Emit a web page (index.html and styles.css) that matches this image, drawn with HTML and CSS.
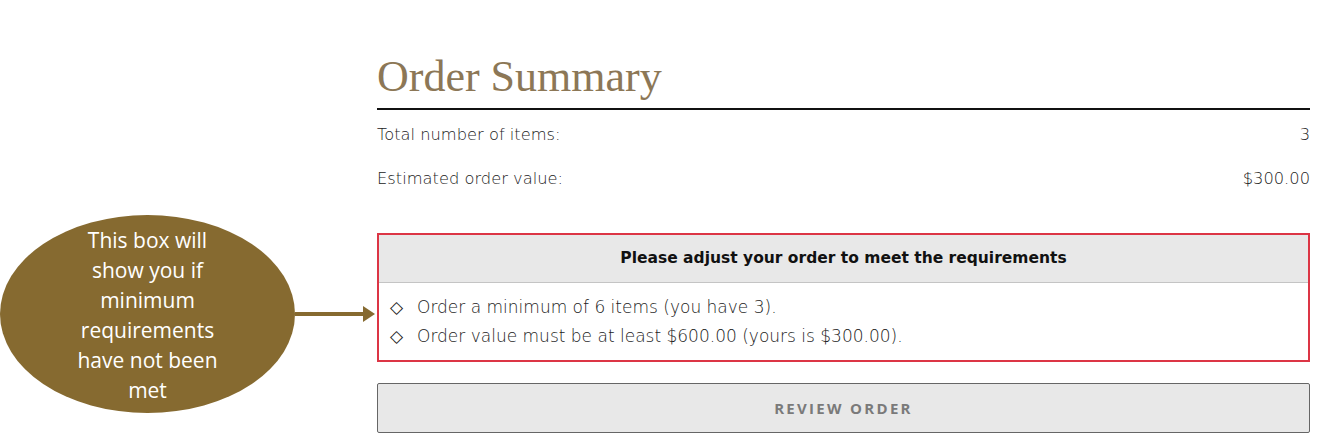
FILE: index.html
```html
<!DOCTYPE html>
<html lang="en">
<head>
  <meta charset="UTF-8" />
  <meta name="viewport" content="width=device-width, initial-scale=1" />
  <title>Order Summary</title>
  <link rel="stylesheet" href="styles.css">
</head>
<body>
  <div class="callout">
    <div class="bubble">This box will show you if minimum requirements have not been met</div>
    <div class="arrow"></div>
  </div>

  <div class="summary">
    <h1>Order Summary</h1>

    <div class="row"><span>Total number of items:</span><span>3</span></div>
    <div class="row"><span>Estimated order value:</span><span>$300.00</span></div>

    <div class="notice">
      <div class="notice-head">Please adjust your order to meet the requirements</div>
      <ul>
        <li>Order a minimum of 6 items (you have 3).</li>
        <li>Order value must be at least $600.00 (yours is $300.00).</li>
      </ul>
    </div>

    <button class="review">Review Order</button>
  </div>
</body>
</html>
```

FILE: styles.css
```css
body {
  margin: 0;
  background: #fff;
  font-family: "DejaVu Sans", sans-serif;
  color: #333;
}
.summary {
  width: 933px;
  margin-left: 377px;
  padding-top: 52px;
}
h1 {
  font-family: "Liberation Serif", serif;
  font-weight: normal;
  font-size: 44px;
  color: #8c7756;
  margin: 0;
  padding-bottom: 6px;
  border-bottom: 2px solid #111;
  line-height: 50px;
}
.row {
  display: flex;
  justify-content: space-between;
  font-size: 16.3px;
  font-weight: 200;
  height: 44px;
  line-height: 44px;
  color: #222;
}
.row:first-of-type {
  margin-top: 3px;
}
.notice {
  margin-top: 32px;
  border: 2px solid #dc3545;
}
.notice-head {
  background: #e8e8e8;
  border-bottom: 1px solid #c4c4c4;
  text-align: center;
  font-weight: bold;
  font-size: 15.5px;
  height: 47px;
  line-height: 47px;
  color: #111;
}
.notice ul {
  list-style: none;
  margin: 0;
  padding: 10px 12px 9px 11px;
}
.notice li {
  font-size: 17px;
  font-weight: 200;
  line-height: 29px;
  color: #222;
}
.notice li::before {
  content: "\25C7";
  display: inline-block;
  width: 27px;
  font-size: 17px;
  font-weight: normal;
}
.review {
  display: block;
  width: 100%;
  margin-top: 21px;
  height: 50px;
  background: #e8e8e8;
  border: 1px solid #666;
  border-radius: 2px;
  font-family: "Open Sans", sans-serif;
  font-weight: bold;
  font-size: 15px;
  letter-spacing: 2.3px;
  text-transform: uppercase;
  color: #7a7a7a;
}
.callout {
  position: absolute;
  left: 0;
  top: 215px;
  display: flex;
  align-items: center;
}
.bubble {
  width: 295px;
  height: 198px;
  border-radius: 50%;
  background: #866a30;
  color: #fff;
  font-family: "Open Sans", sans-serif;
  font-size: 21px;
  line-height: 30px;
  text-align: center;
  box-sizing: border-box;
  padding: 10px 66px 0;
}
.arrow {
  width: 68px;
  height: 4px;
  background: #866a30;
  position: relative;
}
.arrow::after {
  content: "";
  position: absolute;
  right: -12px;
  top: -6px;
  border-left: 12px solid #866a30;
  border-top: 8px solid transparent;
  border-bottom: 8px solid transparent;
}
```
